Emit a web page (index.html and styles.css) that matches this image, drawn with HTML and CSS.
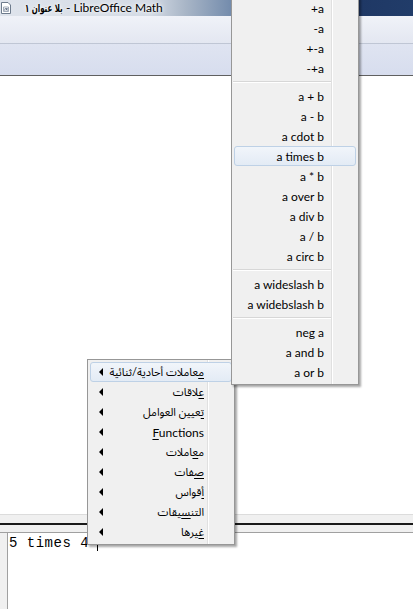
FILE: index.html
```html
<!DOCTYPE html>
<html lang="ar">
<head>
    <meta charset="UTF-8">
    <meta name="viewport" content="width=device-width, initial-scale=1.0">
    <title>بلا عنوان ١ - LibreOffice Math</title>
    <link rel="stylesheet" href="styles.css">
</head>
<body>
    <div class="window">
        <!-- Title bar -->
        <div class="titlebar">
            <svg class="app-icon" width="10" height="12" viewBox="0 0 10 12">
                <path d="M0.5 0.5 H7 L9.5 3 V11.5 H0.5 Z" fill="#fff" stroke="#6d7b8c"/>
                <path d="M2.5 5 H7.5 V9.5 H2.5 Z" fill="none" stroke="#8a97a8" stroke-width="0.8"/>
                <path d="M3.5 8.5 L4.5 6 M5 8.5 L6.5 6 M5 6 L6.5 8.5" stroke="#3a4c66" stroke-width="0.7"/>
            </svg>
            <span class="title-text" dir="ltr"><span class="title-ar">بلا عنوان ١</span> - LibreOffice Math</span>
        </div>

        <!-- Toolbars -->
        <div class="toolbar toolbar-top"></div>
        <div class="toolbar toolbar-bottom"></div>

        <!-- Formula document -->
        <div class="document"></div>

        <!-- Splitter between document and commands -->
        <div class="splitter">
            <div class="splitter-line"></div>
        </div>

        <!-- Command window -->
        <div class="commands">
            <div class="commands-gutter"></div>
            <div class="commands-edit">
                <span class="formula">5 times 4 </span><span class="caret"></span>
            </div>
        </div>
    </div>

    <!-- Context menu -->
    <div class="menu context-menu" dir="rtl">
        <div class="item active"><span class="label ar"><u>م</u>عاملات أحادية/ثنائية</span><span class="arrow"></span></div>
        <div class="item"><span class="label ar"><u>ع</u>لاقات</span><span class="arrow"></span></div>
        <div class="item"><span class="label ar"><u>ت</u>عيين العوامل</span><span class="arrow"></span></div>
        <div class="item"><span class="label" dir="ltr"><u>F</u>unctions</span><span class="arrow"></span></div>
        <div class="item"><span class="label ar">م<u>ع</u>املات</span><span class="arrow"></span></div>
        <div class="item"><span class="label ar"><u>ص</u>فات</span><span class="arrow"></span></div>
        <div class="item"><span class="label ar"><u>أ</u>قواس</span><span class="arrow"></span></div>
        <div class="item"><span class="label ar">التن<u>س</u>يقات</span><span class="arrow"></span></div>
        <div class="item"><span class="label ar"><u>غ</u>يرها</span><span class="arrow"></span></div>
    </div>

    <!-- Unary/binary operators submenu -->
    <div class="menu operators-menu">
        <div class="item"><span class="label">+a</span></div>
        <div class="item"><span class="label">-a</span></div>
        <div class="item"><span class="label">+-a</span></div>
        <div class="item"><span class="label">-+a</span></div>
        <div class="separator"></div>
        <div class="item"><span class="label">a + b</span></div>
        <div class="item"><span class="label">a - b</span></div>
        <div class="item"><span class="label">a cdot b</span></div>
        <div class="item active"><span class="label">a times b</span></div>
        <div class="item"><span class="label">a * b</span></div>
        <div class="item"><span class="label">a over b</span></div>
        <div class="item"><span class="label">a div b</span></div>
        <div class="item"><span class="label">a / b</span></div>
        <div class="item"><span class="label">a circ b</span></div>
        <div class="separator"></div>
        <div class="item"><span class="label">a wideslash b</span></div>
        <div class="item"><span class="label">a widebslash b</span></div>
        <div class="separator"></div>
        <div class="item"><span class="label">neg a</span></div>
        <div class="item"><span class="label">a and b</span></div>
        <div class="item"><span class="label">a or b</span></div>
    </div>
</body>
</html>
```

FILE: styles.css
```css
body {
    margin: 0;
    padding: 0;
    width: 413px;
    height: 609px;
    overflow: hidden;
    position: relative;
    font-family: 'Lato', 'Noto Sans Arabic', 'DejaVu Sans', sans-serif;
    font-size: 12px;
    color: #000;
    background-color: #fff;
}

.window {
    display: flex;
    flex-direction: column;
    height: 609px;
}

/* Title bar */
.titlebar {
    height: 16px;
    display: flex;
    align-items: center;
    padding-left: 1px;
    background: linear-gradient(to right, #dfe4ec 0, #d3dae4 150px, #a9b6c7 185px, #6f88aa 235px, #2c4877 290px, #1f3865 360px, #213c69 100%);
}

.app-icon {
    flex-shrink: 0;
}

.title-text {
    margin-left: 14px;
    font-size: 12px;
    line-height: 14px;
    white-space: nowrap;
    text-shadow: 0 0 6px #fff, 0 0 3px #fff;
}

.title-ar {
    display: inline-block;
    font-family: 'DejaVu Sans', sans-serif;
    font-size: 11px;
    font-weight: bold;
    transform: scaleX(0.64);
    transform-origin: left center;
    margin-right: -21px;
}

/* Toolbars */
.toolbar {
    flex-shrink: 0;
}

.toolbar-top {
    height: 27px;
    background: linear-gradient(#f0f2f8, #e3e7f1);
    border-bottom: 1px solid #bfc6d4;
}

.toolbar-bottom {
    height: 31px;
    background: linear-gradient(#dfe4f1, #d7ddee);
    border-bottom: 1px solid #606060;
}

/* Document area */
.document {
    flex: 1;
    background-color: #fff;
}

/* Splitter */
.splitter {
    height: 17px;
    flex-shrink: 0;
    background-color: #f0f0f0;
    border-top: 1px solid #dcdcdc;
    border-bottom: 1px solid #a0a0a0;
    display: flex;
    flex-direction: column;
    justify-content: center;
}

.splitter-line {
    height: 2px;
    background-color: #1a1a1a;
}

/* Command window */
.commands {
    height: 76px;
    flex-shrink: 0;
    display: flex;
}

.commands-gutter {
    width: 7px;
    background-color: #f0f0f0;
    border-right: 1px solid #a0a0a0;
}

.commands-edit {
    flex: 1;
    background-color: #fff;
    padding: 2px 0 0 1px;
    display: flex;
    align-items: flex-start;
}

.formula {
    font-family: 'Liberation Mono', monospace;
    font-size: 14px;
    letter-spacing: 0.5px;
    line-height: 16px;
    white-space: pre;
}

.caret {
    width: 1px;
    height: 15px;
    margin-top: 1px;
    margin-left: -1px;
    background-color: #000;
}

/* Menus */
.menu {
    position: absolute;
    background-color: #f0f0f0;
    border: 1px solid #979797;
    padding: 2px 0;
    box-shadow: 2px 2px 2px rgba(0, 0, 0, 0.35);
}

.menu::after {
    content: '';
    position: absolute;
    top: 0;
    bottom: 0;
    right: 25px;
    width: 1px;
    background-color: #e0e0e0;
    border-right: 1px solid #fff;
}

.item {
    position: relative;
    z-index: 1;
    height: 20px;
    display: flex;
    align-items: center;
    margin: 0 2px;
    padding: 0 31px 0 8px;
    border: 1px solid transparent;
    box-sizing: border-box;
    white-space: nowrap;
}

.item.active {
    background: linear-gradient(#f1f5fa, #e3ebf5);
    border-color: #bed1e6;
    border-radius: 3px;
}

.label u {
    text-decoration: underline;
    text-underline-offset: 2px;
}

.label.ar {
    font-size: 11px;
}

.separator {
    height: 8px;
    display: flex;
    align-items: center;
    margin-right: 27px;
    margin-left: 1px;
}

.separator::before {
    content: '';
    flex: 1;
    height: 1px;
    background-color: #d7d7d7;
    border-bottom: 1px solid #fff;
}

.context-menu {
    left: 87px;
    top: 359px;
    width: 146px;
    z-index: 1;
}

.context-menu .item {
    justify-content: space-between;
    padding-right: 27px;
}

.context-menu .arrow {
    width: 0;
    height: 0;
    border-top: 4px solid transparent;
    border-bottom: 4px solid transparent;
    border-right: 4px solid #000;
}

.operators-menu {
    left: 231px;
    top: -5px;
    width: 126px;
    z-index: 2;
}

.operators-menu .item {
    justify-content: flex-end;
}
```
